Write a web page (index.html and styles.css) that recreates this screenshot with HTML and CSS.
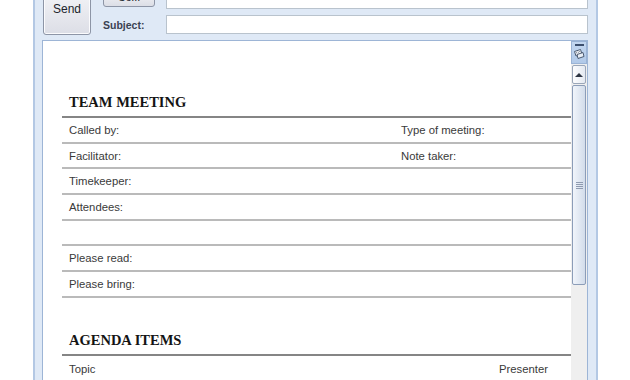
FILE: index.html
```html
<!DOCTYPE html>
<html lang="en">
<head>
    <meta charset="UTF-8">
    <title>Meeting - Message</title>
    <link rel="stylesheet" href="styles.css">
</head>
<body>
    <div class="window">
        <!-- Header: send button and address fields -->
        <div class="header">
            <div class="send-btn">Send</div>
            <div class="fields">
                <div class="field-row cc-row">
                    <div class="cc-btn">Cc...</div>
                    <div class="text-input"></div>
                </div>
                <div class="field-row subject-row">
                    <span class="field-label">Subject:</span>
                    <div class="text-input"></div>
                </div>
            </div>
        </div>

        <!-- Message body -->
        <div class="editor">
            <div class="doc">
                <h2 class="doc-heading first">TEAM MEETING</h2>
                <div class="row two-col"><span>Called by:</span><span>Type of meeting:</span></div>
                <div class="row two-col"><span>Facilitator:</span><span>Note taker:</span></div>
                <div class="row"><span>Timekeeper:</span></div>
                <div class="row"><span>Attendees:</span></div>
                <div class="row"></div>
                <div class="row"><span>Please read:</span></div>
                <div class="row"><span>Please bring:</span></div>

                <h2 class="doc-heading agenda">AGENDA ITEMS</h2>
                <div class="row agenda-row"><span>Topic</span><span>Presenter</span></div>
            </div>

            <div class="scrollbar">
                <div class="ruler-btn">
                    <span class="ruler-dash"></span>
                    <svg width="12" height="11" viewBox="0 0 12 11">
                        <path d="M1.5 3.5 L7.5 1.5 L9 6 L3 8 Z" fill="#fff" stroke="#4a5a72" stroke-width="1"/>
                        <path d="M4 6.5 L10 4.5 L11 8.5 L5 10.5 Z" fill="#e8eef6" stroke="#4a5a72" stroke-width="1"/>
                        <path d="M3.3 4.2 L3.8 5.4 M5 3.6 L5.4 4.8 M6.6 3 L7 4.2" stroke="#4a5a72" stroke-width="0.8"/>
                    </svg>
                </div>
                <div class="arrow-btn"><span class="arrow-up"></span></div>
                <div class="thumb">
                    <span class="grip"></span>
                </div>
                <div class="track"></div>
            </div>
        </div>
    </div>
</body>
</html>
```

FILE: styles.css
```css
* {
    box-sizing: border-box;
}

body {
    margin: 0;
    background-color: #fff;
    font-family: 'Liberation Sans', Arial, sans-serif;
    height: 380px;
    overflow: hidden;
}

.window {
    margin-left: 33px;
    width: 565px;
    height: 380px;
    background-color: #dfe9f6;
    border-left: 2px solid #b3c8e4;
    border-right: 2px solid #b3c8e4;
    display: flex;
    flex-direction: column;
}

/* Header */
.header {
    height: 40px;
    padding: 0 8px 0 8px;
    display: flex;
    flex-shrink: 0;
}

.send-btn {
    width: 48px;
    height: 47px;
    margin-top: -12px;
    padding-bottom: 18px;
    display: flex;
    align-items: flex-end;
    justify-content: center;
    font-size: 12px;
    color: #20242c;
    background: linear-gradient(to bottom, #f5f5f8, #dcdee6);
    border: 1px solid #8d95a6;
    border-radius: 3px;
    box-shadow: inset 0 0 0 1px #fbfbfd;
}

.fields {
    flex: 1;
    margin-left: 12px;
    display: flex;
    flex-direction: column;
}

.field-row {
    display: flex;
    align-items: flex-end;
}

.cc-row {
    height: 19px;
    margin-top: -10px;
}

.cc-btn {
    width: 52px;
    height: 17px;
    margin-bottom: 2px;
    margin-right: 11px;
    font-size: 11px;
    line-height: 12px;
    text-align: center;
    color: #20242c;
    background: linear-gradient(to bottom, #f5f5f8, #dcdee6);
    border: 1px solid #8d95a6;
    border-radius: 3px;
}

.subject-row {
    margin-top: 6px;
    height: 19px;
    align-items: center;
}

.field-label {
    width: 63px;
    font-size: 10.5px;
    font-weight: bold;
    color: #3a4252;
}

.text-input {
    flex: 1;
    height: 19px;
    background-color: #fff;
    border: 1px solid #b9c3cd;
}

/* Editor */
.editor {
    flex: 1;
    margin: 0 8px 0 7px;
    background-color: #fff;
    border: 1px solid #9db5d6;
    border-bottom: none;
    display: flex;
    overflow: hidden;
}

.doc {
    flex: 1;
    padding-left: 19px;
}

.doc-heading {
    margin: 0;
    padding-left: 7px;
    padding-bottom: 4px;
    font-family: 'Liberation Serif', 'Times New Roman', serif;
    font-size: 14.5px;
    line-height: 20px;
    font-weight: bold;
    color: #141414;
    border-bottom: 2px solid #858585;
}

.doc-heading.first {
    padding-top: 51px;
}

.doc-heading.agenda {
    padding-top: 32px;
}

.row {
    height: 25.7px;
    padding-left: 7px;
    display: flex;
    align-items: center;
    font-size: 11.3px;
    color: #3a3a3a;
    border-bottom: 2px solid #bababa;
}

.two-col span:first-child {
    width: 332px;
}

.agenda-row {
    justify-content: space-between;
    padding-right: 23px;
    border-bottom: none;
}

/* Scrollbar */
.scrollbar {
    width: 16px;
    display: flex;
    flex-direction: column;
    background-color: #efefef;
}

.ruler-btn {
    height: 23px;
    background: linear-gradient(to bottom, #c3d7f0, #b1c9e8);
    border: 1px solid #9ab3d5;
    display: flex;
    flex-direction: column;
    align-items: center;
}

.ruler-dash {
    width: 9px;
    height: 2px;
    margin-top: 2px;
    margin-bottom: 2px;
    background-color: #3c4f6e;
}

.arrow-btn {
    height: 19px;
    margin: 1px 1px 0 1px;
    background: linear-gradient(to right, #fdfdfe, #e4e9f1);
    border: 1px solid #9aa6b8;
    border-radius: 2px;
    display: flex;
    align-items: center;
    justify-content: center;
}

.arrow-up {
    width: 0;
    height: 0;
    border-left: 4px solid transparent;
    border-right: 4px solid transparent;
    border-bottom: 4px solid #2d3442;
}

.thumb {
    height: 200px;
    margin: 1px 1px 0 1px;
    background: linear-gradient(to right, #f1f5fb, #d2dcea);
    border: 1px solid #8c9db8;
    border-radius: 2px;
    display: flex;
    align-items: center;
    justify-content: center;
}

.grip {
    width: 7px;
    height: 7px;
    background: repeating-linear-gradient(to bottom, #8f9bb0 0, #8f9bb0 1px, transparent 1px, transparent 2px);
}

.track {
    flex: 1;
}
```
